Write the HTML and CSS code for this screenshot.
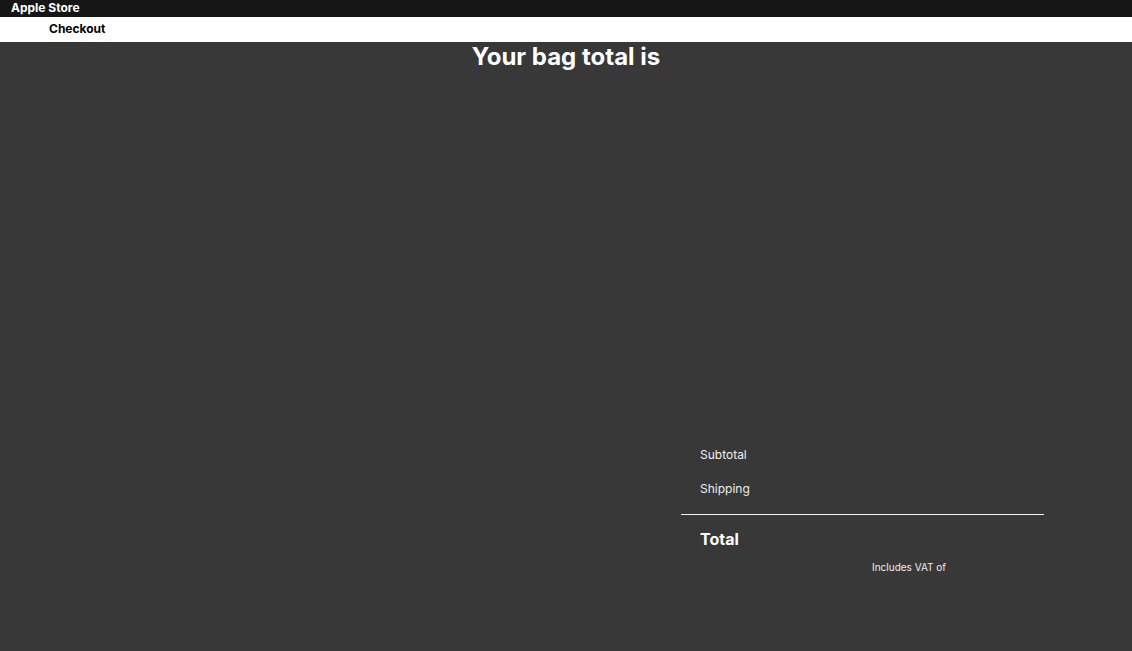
FILE: index.html
```html
<!DOCTYPE html>
<html lang="en">
<head>
<meta charset="utf-8">
<title>Apple Store - Checkout</title>
<link rel="stylesheet" href="styles.css">
</head>
<body>
<header class="topbar">Apple Store</header>
<nav class="subbar">Checkout</nav>
<main class="page">
  <h1 class="title">Your bag total is</h1>
  <div class="content">
    <div class="items"></div>
    <section class="summary">
      <div class="row">Subtotal</div>
      <div class="row row-last">Shipping</div>
      <hr class="divider">
      <div class="total">Total</div>
      <div class="vat">Includes VAT of</div>
    </section>
  </div>
</main>
</body>
</html>
```
FILE: styles.css
```css
* { box-sizing: border-box; }
html, body { margin: 0; padding: 0; }
body {
  font-family: Inter, "Noto Sans", sans-serif;
  background: #383838;
  color: #ffffff;
  min-height: 651px;
}
.topbar {
  background: #161616;
  color: #fff;
  height: 17px;
  line-height: 15px;
  padding-left: 11px;
  font-size: 12px;
  font-weight: 700;
}
.subbar {
  background: #fff;
  color: #000;
  height: 25px;
  line-height: 23px;
  padding-left: 49px;
  font-size: 12px;
  font-weight: 700;
}
.title {
  margin: 0;
  text-align: center;
  font-size: 24px;
  line-height: 29px;
  font-weight: 700;
}
.content {
  display: flex;
}
.items { width: 681px; flex: none; }
.summary {
  width: 363px;
  padding-top: 376px;
}
.row {
  padding-left: 19px;
  font-size: 12px;
  line-height: 15px;
  height: 34px;
  color: #eeeeee;
}
.row-last { height: 33px; }
.divider {
  margin: 0;
  border: 0;
  border-top: 1px solid #f2f2f2;
  height: 0;
}
.total {
  padding-left: 19px;
  padding-top: 14px;
  font-size: 16px;
  font-weight: 700;
  line-height: 20px;
}
.vat {
  padding-left: 191px;
  padding-top: 12px;
  font-size: 10px;
  line-height: 12px;
  color: #eeeeee;
}
```
